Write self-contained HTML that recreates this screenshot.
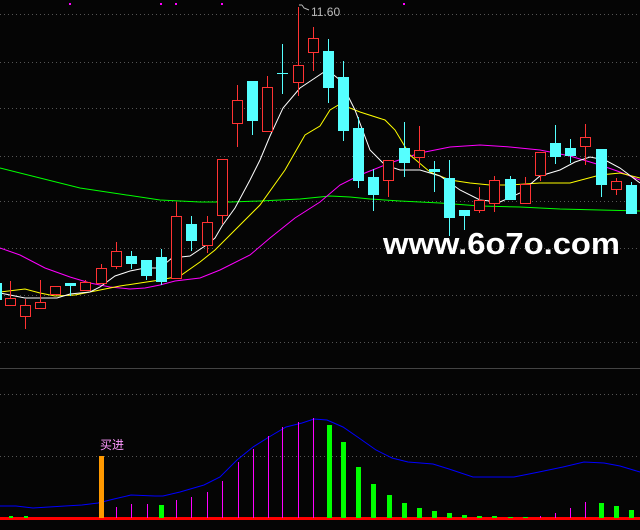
<!DOCTYPE html>
<html><head><meta charset="utf-8"><style>
html,body{margin:0;padding:0;background:#050505;}
svg{display:block;}
</style></head><body>
<svg width="640" height="530" viewBox="0 0 640 530" xmlns="http://www.w3.org/2000/svg">
<rect width="640" height="530" fill="#050505"/>
<g stroke="#555" stroke-width="1" stroke-dasharray="1,3" shape-rendering="crispEdges">
<line x1="0" y1="14.5" x2="640" y2="14.5"/>
<line x1="0" y1="62.5" x2="640" y2="62.5"/>
<line x1="0" y1="108.5" x2="640" y2="108.5"/>
<line x1="0" y1="156.5" x2="640" y2="156.5"/>
<line x1="0" y1="201.5" x2="640" y2="201.5"/>
<line x1="0" y1="248.5" x2="640" y2="248.5"/>
<line x1="0" y1="295.5" x2="640" y2="295.5"/>
<line x1="0" y1="342.5" x2="640" y2="342.5"/>
<line x1="0" y1="394.5" x2="640" y2="394.5"/>
<line x1="0" y1="456.5" x2="640" y2="456.5"/>
</g>
<line x1="0" y1="368.5" x2="640" y2="368.5" stroke="#444" stroke-width="1" shape-rendering="crispEdges"/>
<g fill="#f0f">
<rect x="69" y="3" width="2" height="2"/><rect x="160" y="3" width="2" height="2"/><rect x="175" y="3" width="2" height="2"/><rect x="221" y="3" width="2" height="2"/><rect x="403" y="3" width="2" height="2"/>
</g>
<g fill="none" stroke-width="1">
<polyline stroke="#0f0" points="0,168 40,178 80,188 120,194 160,200 200,202 230,202 260,201 300,199 330,196 350,197 370,199 400,201 440,203 480,206 520,207 560,209 600,210 640,211"/>
<polyline stroke="#f0f" points="0,248 20,255 45,268 70,277 90,283 110,287 130,289 145,288 160,285 175,281 200,278 220,270 250,255 270,238 295,218 320,202 340,185 360,175 390,163 420,153 450,147 480,145 510,147 540,150 570,156 600,165 620,172 640,180"/>
<polyline stroke="#ff0" points="0,292 25,289 40,293 55,296 75,295 100,290 120,286 140,283 160,280 180,276 200,262 215,250 235,230 260,205 285,170 305,135 320,126 330,110 340,104 360,112 385,120 395,130 410,155 430,172 450,180 470,183 490,185 510,185 540,183 570,183 600,175 620,173 640,178"/>
<polyline stroke="#fff" points="0,293 10,295 25,298 57,298 70,294 90,292 100,287 115,276 130,271 145,268 160,268 172,258 190,256 205,246 215,238 222,226 235,208 250,180 260,160 270,136 283,108 300,88 315,78 327,70 330,72 340,80 355,110 370,150 385,165 400,170 420,170 440,176 460,190 480,200 500,202 520,193 540,176 560,170 575,162 590,157 605,160 620,168 640,183"/>
</g>
<g stroke="#f33" stroke-width="1" fill="#050505" shape-rendering="crispEdges">
<line x1="10.5" y1="281" x2="10.5" y2="298"/><rect x="5.5" y="298.5" width="10" height="7"/>
<line x1="25.5" y1="299" x2="25.5" y2="329"/><rect x="20.5" y="305.5" width="10" height="11"/>
<line x1="40.5" y1="280" x2="40.5" y2="302"/><rect x="35.5" y="302.5" width="10" height="6"/>
<rect x="50.5" y="286.5" width="10" height="8"/>
<line x1="85.5" y1="280" x2="85.5" y2="282"/><rect x="80.5" y="282.5" width="10" height="8"/>
<line x1="101.5" y1="264" x2="101.5" y2="268"/><rect x="96.5" y="268.5" width="10" height="15"/>
<line x1="116.5" y1="242" x2="116.5" y2="269"/><rect x="111.5" y="251.5" width="10" height="15"/>
<line x1="176.5" y1="202" x2="176.5" y2="216"/><rect x="171.5" y="216.5" width="10" height="62"/>
<line x1="207.5" y1="216" x2="207.5" y2="253"/><rect x="202.5" y="222.5" width="10" height="23"/>
<line x1="222.5" y1="215" x2="222.5" y2="224"/><rect x="217.5" y="159.5" width="10" height="56"/>
<line x1="237.5" y1="85" x2="237.5" y2="147"/><rect x="232.5" y="100.5" width="10" height="23"/>
<line x1="267.5" y1="76" x2="267.5" y2="87"/><rect x="262.5" y="87.5" width="10" height="44"/>
<line x1="298.5" y1="7" x2="298.5" y2="96"/><rect x="293.5" y="65.5" width="10" height="17"/>
<line x1="313.5" y1="27" x2="313.5" y2="71"/><rect x="308.5" y="38.5" width="10" height="14"/>
<line x1="388.5" y1="180" x2="388.5" y2="197"/><rect x="383.5" y="160.5" width="10" height="20"/>
<line x1="419.5" y1="126" x2="419.5" y2="168"/><rect x="414.5" y="150.5" width="10" height="7"/>
<line x1="479.5" y1="187" x2="479.5" y2="213"/><rect x="474.5" y="200.5" width="10" height="10"/>
<line x1="494.5" y1="176" x2="494.5" y2="212"/><rect x="489.5" y="180.5" width="10" height="23"/>
<line x1="525.5" y1="177" x2="525.5" y2="184"/><rect x="520.5" y="184.5" width="10" height="19"/>
<line x1="540.5" y1="175" x2="540.5" y2="181"/><rect x="535.5" y="152.5" width="10" height="23"/>
<line x1="585.5" y1="124" x2="585.5" y2="165"/><rect x="580.5" y="137.5" width="10" height="9"/>
<line x1="616.5" y1="178" x2="616.5" y2="195"/><rect x="611.5" y="181.5" width="10" height="8"/>
</g>
<g stroke="#5ff" stroke-width="1" fill="#5ff" shape-rendering="crispEdges">
<rect x="0" y="283" width="2" height="17" stroke="none"/>
<line x1="70.5" y1="283" x2="70.5" y2="296"/><rect x="65" y="283" width="11" height="3" stroke="none"/>
<line x1="131.5" y1="251" x2="131.5" y2="269"/><rect x="126" y="256" width="11" height="8" stroke="none"/>
<line x1="146.5" y1="260" x2="146.5" y2="280"/><rect x="141" y="260" width="11" height="16" stroke="none"/>
<line x1="161.5" y1="249" x2="161.5" y2="285"/><rect x="156" y="257" width="11" height="25" stroke="none"/>
<line x1="191.5" y1="216" x2="191.5" y2="251"/><rect x="186" y="224" width="11" height="17" stroke="none"/>
<line x1="252.5" y1="81" x2="252.5" y2="135"/><rect x="247" y="81" width="11" height="40" stroke="none"/>
<line x1="282.5" y1="44" x2="282.5" y2="94"/><line x1="277" y1="73.5" x2="288" y2="73.5"/>
<line x1="328.5" y1="39" x2="328.5" y2="103"/><rect x="323" y="51" width="11" height="37" stroke="none"/>
<line x1="343.5" y1="61" x2="343.5" y2="141"/><rect x="338" y="77" width="11" height="54" stroke="none"/>
<line x1="358.5" y1="117" x2="358.5" y2="188"/><rect x="353" y="128" width="11" height="53" stroke="none"/>
<line x1="373.5" y1="169" x2="373.5" y2="211"/><rect x="368" y="177" width="11" height="18" stroke="none"/>
<line x1="404.5" y1="122" x2="404.5" y2="177"/><rect x="399" y="148" width="11" height="15" stroke="none"/>
<line x1="434.5" y1="161" x2="434.5" y2="192"/><rect x="429" y="169" width="11" height="3" stroke="none"/>
<line x1="449.5" y1="160" x2="449.5" y2="236"/><rect x="444" y="178" width="11" height="40" stroke="none"/>
<line x1="464.5" y1="210" x2="464.5" y2="230"/><rect x="459" y="210" width="11" height="6" stroke="none"/>
<line x1="510.5" y1="176" x2="510.5" y2="200"/><rect x="505" y="179" width="11" height="21" stroke="none"/>
<line x1="555.5" y1="125" x2="555.5" y2="164"/><rect x="550" y="143" width="11" height="14" stroke="none"/>
<line x1="570.5" y1="139" x2="570.5" y2="163"/><rect x="565" y="148" width="11" height="8" stroke="none"/>
<line x1="601.5" y1="149" x2="601.5" y2="197"/><rect x="596" y="149" width="11" height="36" stroke="none"/>
<line x1="631.5" y1="182" x2="631.5" y2="214"/><rect x="626" y="185" width="11" height="29" stroke="none"/>
</g>
<path d="M299 5 L302 5 M302 5 L304 8 L309 10" stroke="#bbb" fill="none"/>
<text x="311" y="16" font-family="Liberation Sans, sans-serif" font-size="12" fill="#bbb">11.60</text>
<text x="383" y="254" font-family="Liberation Sans, sans-serif" font-weight="bold" font-size="31" fill="#fff" textLength="237" lengthAdjust="spacingAndGlyphs">www.6o7o.com</text>
<polyline fill="none" stroke="#00f" stroke-width="1" points="0,506 16,506 33,508 49,507 65,506 82,505 98,503 114,499 131,495 155,496 163,496 180,492 204,485 220,477 237,460 253,447 269,437 286,427 302,423 314,419 327,420 343,427 359,438 376,450 392,458 408,462 433,464 449,469 473,477 514,477 539,472 563,467 584,462 604,463 620,466 640,472"/>
<rect x="0" y="517" width="640" height="3" fill="#f00"/>
<rect x="99" y="456" width="5" height="62" fill="#f90"/>
<text x="100" y="449" font-family="Liberation Sans, 'Noto Sans CJK SC', sans-serif" font-size="12" fill="#f9f">买进</text>
<g stroke="#f0f" stroke-width="1" shape-rendering="crispEdges">
<line x1="116.5" y1="507" x2="116.5" y2="518"/><line x1="131.5" y1="504" x2="131.5" y2="518"/><line x1="147.5" y1="504" x2="147.5" y2="518"/>
<line x1="176.5" y1="500" x2="176.5" y2="518"/><line x1="191.5" y1="497" x2="191.5" y2="518"/><line x1="207.5" y1="492" x2="207.5" y2="518"/>
<line x1="222.5" y1="481" x2="222.5" y2="518"/><line x1="238.5" y1="462" x2="238.5" y2="518"/><line x1="253.5" y1="449" x2="253.5" y2="518"/>
<line x1="268.5" y1="436" x2="268.5" y2="518"/><line x1="282.5" y1="427" x2="282.5" y2="518"/><line x1="298.5" y1="422" x2="298.5" y2="518"/>
<line x1="313.5" y1="418" x2="313.5" y2="518"/><line x1="540.5" y1="516" x2="540.5" y2="518"/><line x1="555.5" y1="513" x2="555.5" y2="518"/>
<line x1="570.5" y1="508" x2="570.5" y2="518"/><line x1="585.5" y1="502" x2="585.5" y2="518"/>
</g>
<g fill="#0f0">
<rect x="9" y="516" width="4" height="2"/><rect x="24" y="516" width="4" height="2"/>
<rect x="159" y="505" width="5" height="13"/>
<rect x="327" y="425" width="5" height="93"/><rect x="341" y="442" width="5" height="76"/><rect x="356" y="467" width="5" height="51"/>
<rect x="371" y="484" width="5" height="34"/><rect x="387" y="495" width="5" height="23"/><rect x="402" y="503" width="5" height="15"/>
<rect x="417" y="508" width="5" height="10"/><rect x="432" y="511" width="5" height="7"/><rect x="447" y="513" width="5" height="5"/>
<rect x="462" y="515" width="5" height="3"/><rect x="477" y="516" width="5" height="2"/><rect x="492" y="516" width="5" height="2"/>
<rect x="508" y="517" width="5" height="1"/><rect x="523" y="517" width="5" height="1"/>
<rect x="599" y="503" width="5" height="15"/><rect x="614" y="506" width="5" height="12"/><rect x="629" y="510" width="5" height="8"/>
</g>
</svg>
</body></html>
